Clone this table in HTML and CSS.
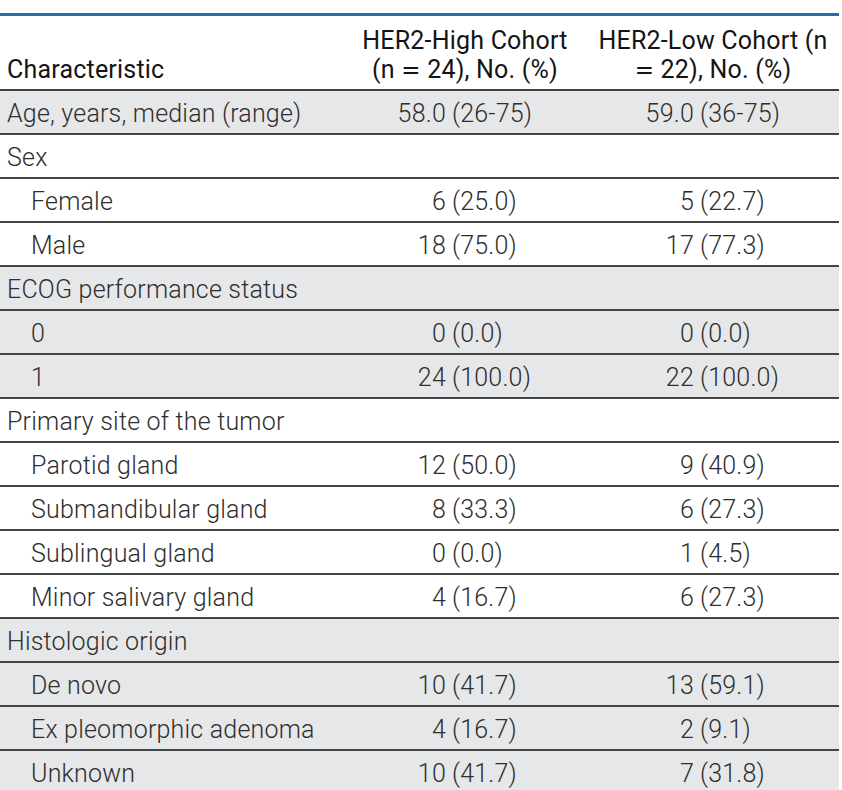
FILE: index.html
```html
<!DOCTYPE html>
<html lang="en">
<head>
<meta charset="utf-8">
<title>Patient characteristics</title>
<link rel="stylesheet" href="styles.css">
</head>
<body>
<div class="page">
<table class="tbl">
  <colgroup>
    <col class="col1">
    <col class="col2">
    <col class="col3">
  </colgroup>
  <thead>
    <tr>
      <th class="h1">Characteristic</th>
      <th class="hc">HER2-High Cohort<br>(n <span class="eq">=</span> 24), No. (%)</th>
      <th class="hc">HER2-Low Cohort (n<br><span class="eq">=</span> 22), No. (%)</th>
    </tr>
  </thead>
  <tbody>
    <tr class="g">
      <td class="lab">Age, years, median (range)</td>
      <td class="v c2"><div class="cell"><span class="n">58.0</span><span class="p">(26-75)</span></div></td>
      <td class="v c3"><div class="cell"><span class="n">59.0</span><span class="p">(36-75)</span></div></td>
    </tr>
    <tr>
      <td class="lab">Sex</td><td></td><td></td>
    </tr>
    <tr>
      <td class="lab sub">Female</td>
      <td class="v c2"><div class="cell"><span class="n">6</span><span class="p">(25.0)</span></div></td>
      <td class="v c3"><div class="cell"><span class="n">5</span><span class="p">(22.7)</span></div></td>
    </tr>
    <tr>
      <td class="lab sub">Male</td>
      <td class="v c2"><div class="cell"><span class="n">18</span><span class="p">(75.0)</span></div></td>
      <td class="v c3"><div class="cell"><span class="n">17</span><span class="p">(77.3)</span></div></td>
    </tr>
    <tr class="g">
      <td class="lab">ECOG performance status</td><td></td><td></td>
    </tr>
    <tr class="g">
      <td class="lab sub">0</td>
      <td class="v c2"><div class="cell"><span class="n">0</span><span class="p">(0.0)</span></div></td>
      <td class="v c3"><div class="cell"><span class="n">0</span><span class="p">(0.0)</span></div></td>
    </tr>
    <tr class="g">
      <td class="lab sub">1</td>
      <td class="v c2"><div class="cell"><span class="n">24</span><span class="p">(100.0)</span></div></td>
      <td class="v c3"><div class="cell"><span class="n">22</span><span class="p">(100.0)</span></div></td>
    </tr>
    <tr>
      <td class="lab">Primary site of the tumor</td><td></td><td></td>
    </tr>
    <tr>
      <td class="lab sub">Parotid gland</td>
      <td class="v c2"><div class="cell"><span class="n">12</span><span class="p">(50.0)</span></div></td>
      <td class="v c3"><div class="cell"><span class="n">9</span><span class="p">(40.9)</span></div></td>
    </tr>
    <tr>
      <td class="lab sub">Submandibular gland</td>
      <td class="v c2"><div class="cell"><span class="n">8</span><span class="p">(33.3)</span></div></td>
      <td class="v c3"><div class="cell"><span class="n">6</span><span class="p">(27.3)</span></div></td>
    </tr>
    <tr>
      <td class="lab sub">Sublingual gland</td>
      <td class="v c2"><div class="cell"><span class="n">0</span><span class="p">(0.0)</span></div></td>
      <td class="v c3"><div class="cell"><span class="n">1</span><span class="p">(4.5)</span></div></td>
    </tr>
    <tr>
      <td class="lab sub">Minor salivary gland</td>
      <td class="v c2"><div class="cell"><span class="n">4</span><span class="p">(16.7)</span></div></td>
      <td class="v c3"><div class="cell"><span class="n">6</span><span class="p">(27.3)</span></div></td>
    </tr>
    <tr class="g">
      <td class="lab">Histologic origin</td><td></td><td></td>
    </tr>
    <tr class="g">
      <td class="lab sub">De novo</td>
      <td class="v c2"><div class="cell"><span class="n">10</span><span class="p">(41.7)</span></div></td>
      <td class="v c3"><div class="cell"><span class="n">13</span><span class="p">(59.1)</span></div></td>
    </tr>
    <tr class="g">
      <td class="lab sub">Ex pleomorphic adenoma</td>
      <td class="v c2"><div class="cell"><span class="n">4</span><span class="p">(16.7)</span></div></td>
      <td class="v c3"><div class="cell"><span class="n">2</span><span class="p">(9.1)</span></div></td>
    </tr>
    <tr class="g">
      <td class="lab sub">Unknown</td>
      <td class="v c2"><div class="cell"><span class="n">10</span><span class="p">(41.7)</span></div></td>
      <td class="v c3"><div class="cell"><span class="n">7</span><span class="p">(31.8)</span></div></td>
    </tr>
  </tbody>
</table>
</div>
</body>
</html>
```

FILE: styles.css
```css
html, body {
  margin: 0;
  padding: 0;
  background: #ffffff;
}

.page {
  padding-top: 13px;
}

.tbl {
  width: 839px;
  table-layout: fixed;
  border-collapse: collapse;
  font-family: Roboto, "Liberation Sans", sans-serif;
  font-size: 25px;
  font-weight: 300;
  letter-spacing: 0.2px;
  color: #2e2e2e;
}

.col1 { width: 343px; }
.col2 { width: 244px; }
.col3 { width: 252px; }

.tbl th {
  font-weight: 400;
  color: #141414;
  line-height: 29px;
  padding: 10px 4px 5px 4px;
  border-top: 3px solid #1f6fb1;
  border-bottom: 2px solid #3f3f3f;
  vertical-align: bottom;
  white-space: nowrap;
}

.tbl th.h1 {
  text-align: left;
  padding-left: 7px;
}

.tbl th.hc {
  text-align: center;
}

.eq {
  font-family: "DejaVu Sans", sans-serif;
  font-size: 23px;
  font-weight: 400;
  line-height: 0;
}

.tbl td {
  line-height: 28px;
  padding: 9px 0 5px 0;
  border-bottom: 2px solid #444444;
  white-space: nowrap;
}

.tbl tr.g td {
  background: #e6e7e9;
}

.tbl td.lab {
  padding-left: 7px;
}

.tbl td.sub {
  padding-left: 31px;
}

.cell {
  display: flex;
  gap: 6px;
}

.cell .n {
  text-align: right;
  flex: 0 0 auto;
}

.c2 .n { width: 103px; }
.c3 .n { width: 107px; }
```
